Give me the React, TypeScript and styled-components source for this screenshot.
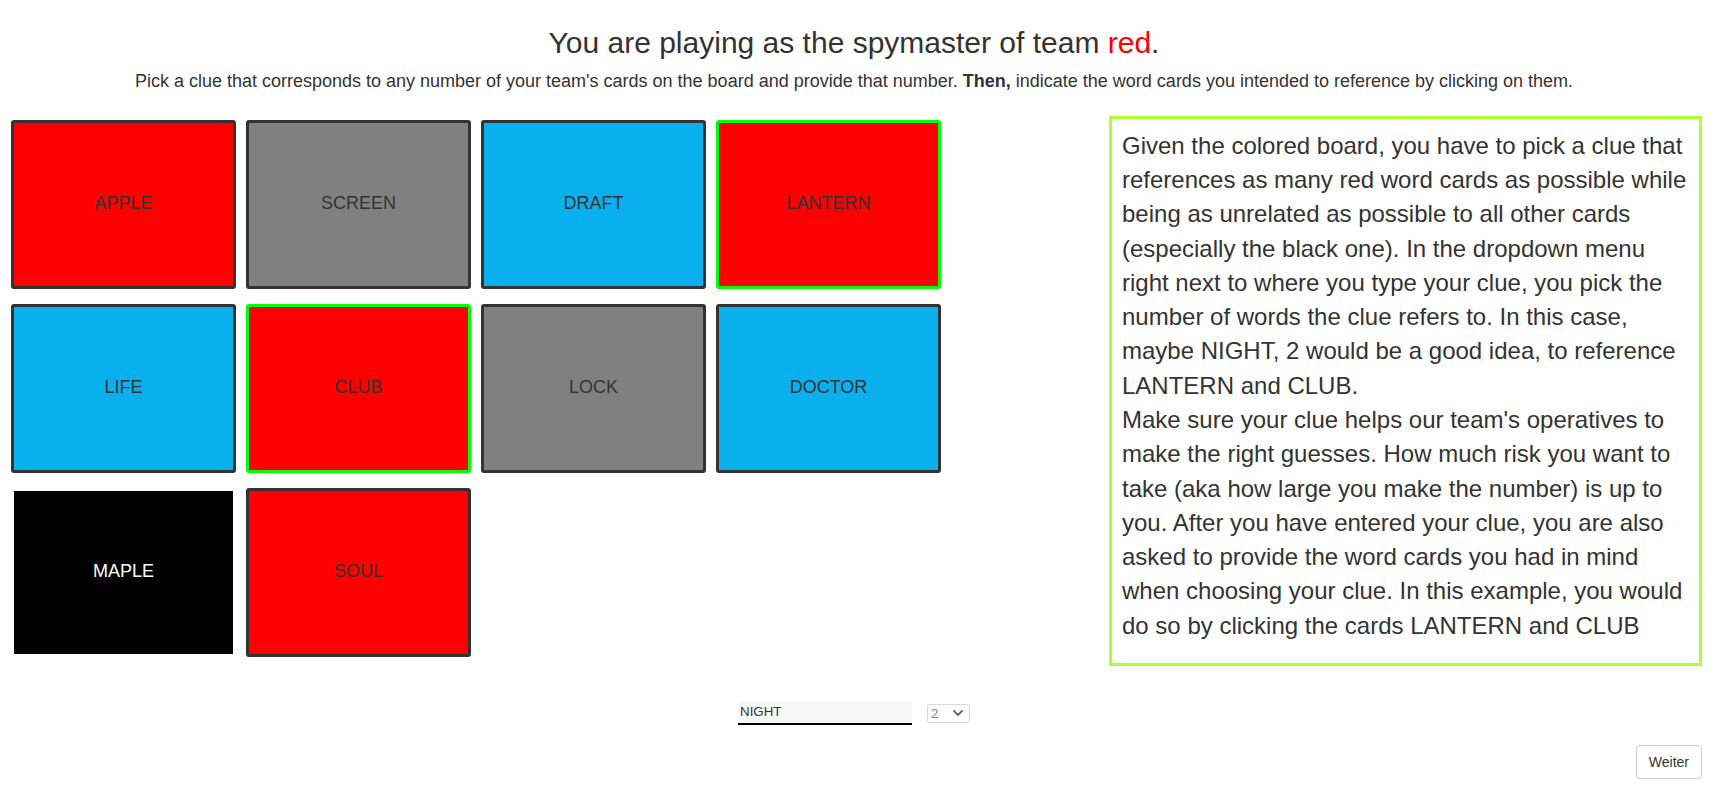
import React from "react";
import styled, { createGlobalStyle } from "styled-components";

const GlobalStyle = createGlobalStyle`
  html, body {
    margin: 0;
    padding: 0;
    background: #ffffff;
  }
  body {
    font-family: "Liberation Sans", Arial, Helvetica, sans-serif;
    font-size: 14px;
    line-height: 1.42857143;
    color: #333333;
  }
  *, *::before, *::after {
    box-sizing: border-box;
  }
`;

const Page = styled.div`
  padding: 0 12px 0 11px;
`;

const Header = styled.header`
  padding-right: 5px;
  text-align: center;
`;

const Title = styled.h2`
  margin: 26px 0 10px;
  font-size: 30px;
  font-weight: 400;
  line-height: 33px;
  color: #333333;
`;

const TeamName = styled.span<{ $color: string }>`
  color: ${(p) => p.$color};
`;

const Instructions = styled.p`
  margin: 0 0 21px;
  font-size: 18px;
  line-height: 25.71px;
`;

const Main = styled.div`
  display: flex;
  justify-content: space-between;
  align-items: flex-start;
`;

const Board = styled.div`
  display: grid;
  grid-template-columns: repeat(4, 225px);
  grid-auto-rows: 169px;
  column-gap: 10px;
  row-gap: 15px;
  padding-top: 4px;
`;

type Kind = "red" | "blue" | "gray" | "black";

const fills: Record<Kind, string> = {
  red: "#ff0000",
  blue: "#08b0ee",
  gray: "#808080",
  black: "#000000",
};

const Card = styled.div<{ $kind: Kind; $picked?: boolean }>`
  display: flex;
  align-items: center;
  justify-content: center;
  background: ${(p) => fills[p.$kind]};
  border: 3px solid
    ${(p) => (p.$kind === "black" ? "#ffffff" : p.$picked ? "#00ff00" : "#333333")};
  border-radius: 3px;
  color: ${(p) => (p.$kind === "black" ? "#ffffff" : "#333333")};
  font-size: 18px;
  cursor: pointer;
  user-select: none;
`;

const Hint = styled.div`
  width: 593px;
  border: 3px solid #adff2f;
  padding: 10px;
  font-size: 24px;
  line-height: 34.2857px;
  color: #333333;
`;

const HintText = styled.p`
  margin: 0 0 10px;
`;

const ClueRow = styled.div`
  display: flex;
  justify-content: center;
  align-items: center;
  gap: 15px;
  margin-top: 35px;
  padding-right: 5px;
`;

const ClueInput = styled.input`
  width: 174px;
  height: 24px;
  border: none;
  border-bottom: 2px solid #000000;
  background: #f8f8f8;
  padding: 1px 2px;
  font-family: "Liberation Sans", Arial, sans-serif;
  font-size: 13.333px;
  color: #333333;
  outline: none;
`;

const SelectWrap = styled.div`
  position: relative;
  width: 43px;
  height: 19px;
`;

const NumberSelect = styled.select`
  appearance: none;
  -webkit-appearance: none;
  width: 43px;
  height: 19px;
  margin: 0;
  border: 1px solid #d9d9d9;
  border-radius: 3px;
  background: #ffffff;
  padding: 0 0 0 3px;
  font-family: "Liberation Sans", Arial, sans-serif;
  font-size: 13.333px;
  line-height: 17px;
  color: #858585;
  outline: none;
`;

const Chevron = styled.svg`
  position: absolute;
  right: 7px;
  top: 7px;
  pointer-events: none;
`;

const Footer = styled.div`
  display: flex;
  justify-content: flex-end;
  margin-top: 20px;
`;

const NextButton = styled.button`
  padding: 6px 12px;
  border: 1px solid #cccccc;
  border-radius: 4px;
  background: #ffffff;
  font-family: "Liberation Sans", Arial, sans-serif;
  font-size: 14px;
  line-height: 20px;
  color: #333333;
  cursor: pointer;
`;

const cards: { word: string; kind: Kind; picked?: boolean }[] = [
  { word: "APPLE", kind: "red" },
  { word: "SCREEN", kind: "gray" },
  { word: "DRAFT", kind: "blue" },
  { word: "LANTERN", kind: "red", picked: true },
  { word: "LIFE", kind: "blue" },
  { word: "CLUB", kind: "red", picked: true },
  { word: "LOCK", kind: "gray" },
  { word: "DOCTOR", kind: "blue" },
  { word: "MAPLE", kind: "black" },
  { word: "SOUL", kind: "red" },
];

export default function App() {
  return (
    <Page>
      <GlobalStyle />
      <Header>
        <Title>
          You are playing as the spymaster of team <TeamName $color="#ff0000">red</TeamName>.
        </Title>
        <Instructions>
          Pick a clue that corresponds to any number of your team's cards on the board and provide
          that number. <strong>Then,</strong> indicate the word cards you intended to reference by
          clicking on them.
        </Instructions>
      </Header>
      <Main>
        <Board>
          {cards.map((c) => (
            <Card key={c.word} $kind={c.kind} $picked={c.picked}>
              {c.word}
            </Card>
          ))}
        </Board>
        <Hint>
          <HintText>
            Given the colored board, you have to pick a clue that references as many red word cards
            as possible while being as unrelated as possible to all other cards (especially the
            black one). In the dropdown menu right next to where you type your clue, you pick the
            number of words the clue refers to. In this case, maybe NIGHT, 2 would be a good idea,
            to reference LANTERN and CLUB.
            <br />
            Make sure your clue helps our team's operatives to make the right guesses. How much risk
            you want to take (aka how large you make the number) is up to you. After you have
            entered your clue, you are also asked to provide the word cards you had in mind when
            choosing your clue. In this example, you would do so by clicking the cards LANTERN and
            CLUB
          </HintText>
        </Hint>
      </Main>
      <ClueRow>
        <ClueInput type="text" defaultValue="NIGHT" />
        <SelectWrap>
          <NumberSelect defaultValue="2">
            {[1, 2, 3, 4, 5, 6, 7, 8, 9].map((n) => (
              <option key={n} value={String(n)}>
                {n}
              </option>
            ))}
          </NumberSelect>
          <Chevron width="10" height="6" viewBox="0 0 10 6">
            <polyline
              points="1,1 5,5 9,1"
              fill="none"
              stroke="#6f6f6f"
              strokeWidth="2"
              strokeLinecap="round"
              strokeLinejoin="round"
            />
          </Chevron>
        </SelectWrap>
      </ClueRow>
      <Footer>
        <NextButton type="button">Weiter</NextButton>
      </Footer>
    </Page>
  );
}
